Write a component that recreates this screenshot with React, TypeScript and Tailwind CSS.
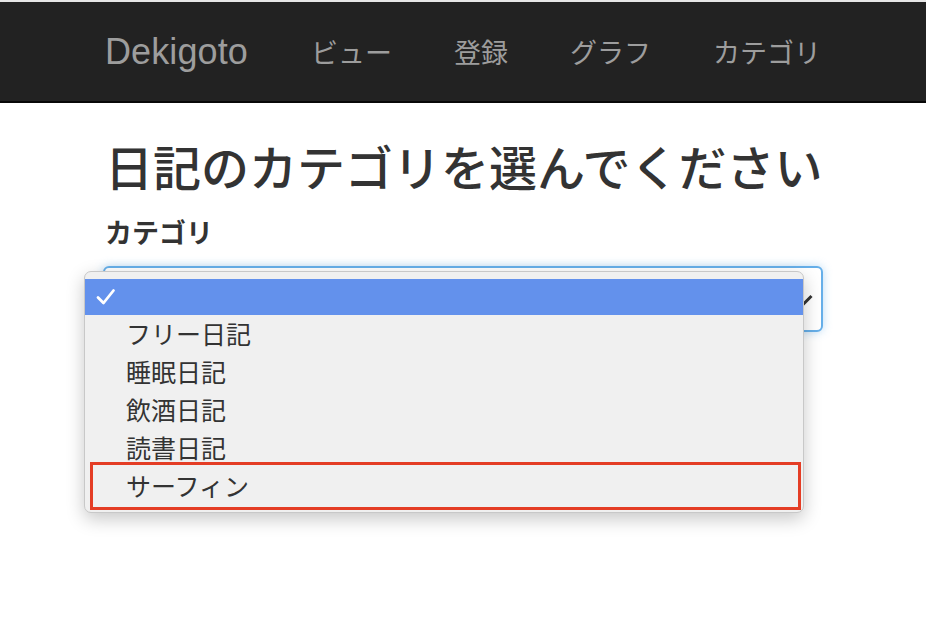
import React from 'react';

const NAV = ['ビュー', '登録', 'グラフ', 'カテゴリ'];
const OPTIONS = ['フリー日記', '睡眠日記', '飲酒日記', '読書日記', 'サーフィン'];

const FONT = 'font-["Noto_Sans_CJK_JP","Noto_Sans",sans-serif]';

export default function App() {
  return (
    <div className={`min-h-[622px] bg-white ${FONT}`}>
      {/* top strip */}
      <div className="h-[2px] bg-[#e6e6e6]" />

      {/* ── Navbar ── */}
      <header className="h-[101px] bg-[#222] border-b-2 border-[#080808]">
        <div className="mx-auto w-[750px] h-full pl-[17px] flex items-center">
          <span className="text-[36px] tracking-[0.1px] text-[#9d9d9d] font-['Liberation_Sans',sans-serif] mr-[63px] leading-none">
            Dekigoto
          </span>
          <nav className="flex items-center gap-[62px]">
            {NAV.map((n) => (
              <a key={n} className="text-[27px] text-[#9d9d9d] leading-none">
                {n}
              </a>
            ))}
          </nav>
        </div>
      </header>

      {/* ── Content ── */}
      <main className="mx-auto w-[750px] px-[15px] pt-[36px]">
        <h1 className="text-[48px] leading-[1.1] font-medium text-[#333] ml-[2px] whitespace-nowrap">
          日記のカテゴリを選んでください
        </h1>

        <label className="block mt-[26px] ml-[2px] text-[27px] font-bold text-[#333] leading-none">
          カテゴリ
        </label>

        <div className="relative mt-[21px]">
          {/* select box */}
          <div className="h-[66px] rounded-[6px] border-2 border-[#66afe9] bg-white shadow-[0_0_10px_rgba(102,175,233,0.45)] flex items-center justify-end pr-[8px]">
            <svg width="14" height="12" viewBox="0 0 14 12" className="mt-[2px]">
              <path d="M1.5 6.5 L5 9.5 L12.5 2" fill="none" stroke="#333" strokeWidth="3" />
            </svg>
          </div>

          {/* open dropdown menu */}
          <div className="absolute left-[-19px] top-[5px] w-[720px] rounded-[7px] bg-[#f0f0f0] border border-[#c8c8c8] shadow-[0_6px_18px_rgba(0,0,0,0.22)] pt-[7px] pb-[7px]">
            <div className="h-[36px] bg-[#6391ec] flex items-center pl-[11px]">
              <svg width="20" height="18" viewBox="0 0 20 18">
                <path d="M2 9.5 L7.5 15 L17.5 2.5" fill="none" stroke="#fff" strokeWidth="2.8" strokeLinecap="round" strokeLinejoin="round" />
              </svg>
            </div>
            {OPTIONS.map((o, i) => (
              <div key={o} className="relative h-[38px] flex items-center pl-[41px] text-[25px] text-[#333]">
                {o}
                {i === OPTIONS.length - 1 && (
                  <span className="absolute left-[5px] right-[2px] top-[-5px] bottom-[-5px] border-[3px] border-[#e43d25]" />
                )}
              </div>
            ))}
          </div>
        </div>
      </main>
    </div>
  );
}
